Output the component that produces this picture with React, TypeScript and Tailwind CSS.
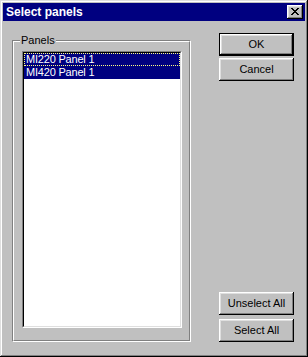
import React from "react";

const font = { fontFamily: '"Liberation Sans", Arial, sans-serif' };

function Btn({ label, def }: { label: string; def?: boolean }) {
  return (
    <div
      className={
        "w-[75px] h-[23px] flex items-center justify-center text-[11px] leading-[13px] text-black bg-[#c0c0c0] " +
        (def
          ? "border border-black shadow-[inset_-1px_-1px_#000,inset_1px_1px_#fff,inset_-2px_-2px_#808080,inset_2px_2px_#dfdfdf]"
          : "shadow-[inset_-1px_-1px_#000,inset_1px_1px_#fff,inset_-2px_-2px_#808080,inset_2px_2px_#dfdfdf]")
      }
    >
      <span>{label}</span>
    </div>
  );
}

export default function App() {
  return (
    <div
      style={font}
      className="w-[308px] h-[357px] bg-[#c0c0c0] p-[3px] flex flex-col shadow-[inset_-1px_-1px_#000,inset_1px_1px_#dfdfdf,inset_-2px_-2px_#808080,inset_2px_2px_#fff]"
    >
      <div className="h-[18px] bg-[#000080] flex items-center pl-[3px] pr-[2px]">
        <span className="text-white font-bold text-[12px] leading-[18px] flex-1">Select panels</span>
        <div className="w-[16px] h-[14px] bg-[#c0c0c0] shadow-[inset_-1px_-1px_#000,inset_1px_1px_#fff,inset_-2px_-2px_#808080,inset_2px_2px_#dfdfdf] relative">
          <svg width="16" height="14" viewBox="0 0 16 14" shapeRendering="crispEdges" className="absolute left-0 top-0">
            <g fill="#000">
              <rect x="4" y="3" width="2" height="1" />
              <rect x="10" y="3" width="2" height="1" />
              <rect x="5" y="4" width="2" height="1" />
              <rect x="9" y="4" width="2" height="1" />
              <rect x="6" y="5" width="4" height="1" />
              <rect x="7" y="6" width="2" height="1" />
              <rect x="6" y="7" width="4" height="1" />
              <rect x="5" y="8" width="2" height="1" />
              <rect x="9" y="8" width="2" height="1" />
              <rect x="4" y="9" width="2" height="1" />
              <rect x="10" y="9" width="2" height="1" />
            </g>
          </svg>
        </div>
      </div>
      <div className="flex-1 flex flex-row pl-[9px] pr-[11px] pt-[12px] pb-[12px]">
        <div className="mt-[7px]">
          <div className="relative w-[179px] h-[302px] border-t border-l border-t-[#808080] border-l-[#808080] border-b border-r border-b-white border-r-white">
            <div className="w-full h-full border-t border-l border-t-white border-l-white border-b border-r border-b-[#808080] border-r-[#808080] pl-[8px] pt-[9px]">
              <div className="w-[160px] h-[277px] border-t border-l border-t-[#808080] border-l-[#808080] border-b border-r border-b-white border-r-white">
                <div className="w-full h-full border-t border-l border-t-black border-l-black border-b border-r border-b-[#dfdfdf] border-r-[#dfdfdf] bg-white">
                  <div className="h-[13px] bg-[#000080] text-white text-[11px] leading-[11px] pl-[1px] border border-dotted border-[#ffff80] tracking-[-0.2px]">
                    MI220 Panel 1
                  </div>
                  <div className="h-[13px] bg-[#000080] text-white text-[11px] leading-[13px] pl-[2px] tracking-[-0.2px]">
                    MI420 Panel 1
                  </div>
                </div>
              </div>
            </div>
            <span className="absolute left-[7px] top-[-7px] px-[1px] bg-[#c0c0c0] text-[11px] leading-[13px] text-black">
              Panels
            </span>
          </div>
        </div>
        <div className="ml-auto w-[75px] flex flex-col justify-between">
          <div className="flex flex-col gap-[2px]">
            <Btn label="OK" def />
            <Btn label="Cancel" />
          </div>
          <div className="flex flex-col gap-[4px]">
            <Btn label="Unselect All" />
            <Btn label="Select All" />
          </div>
        </div>
      </div>
    </div>
  );
}
